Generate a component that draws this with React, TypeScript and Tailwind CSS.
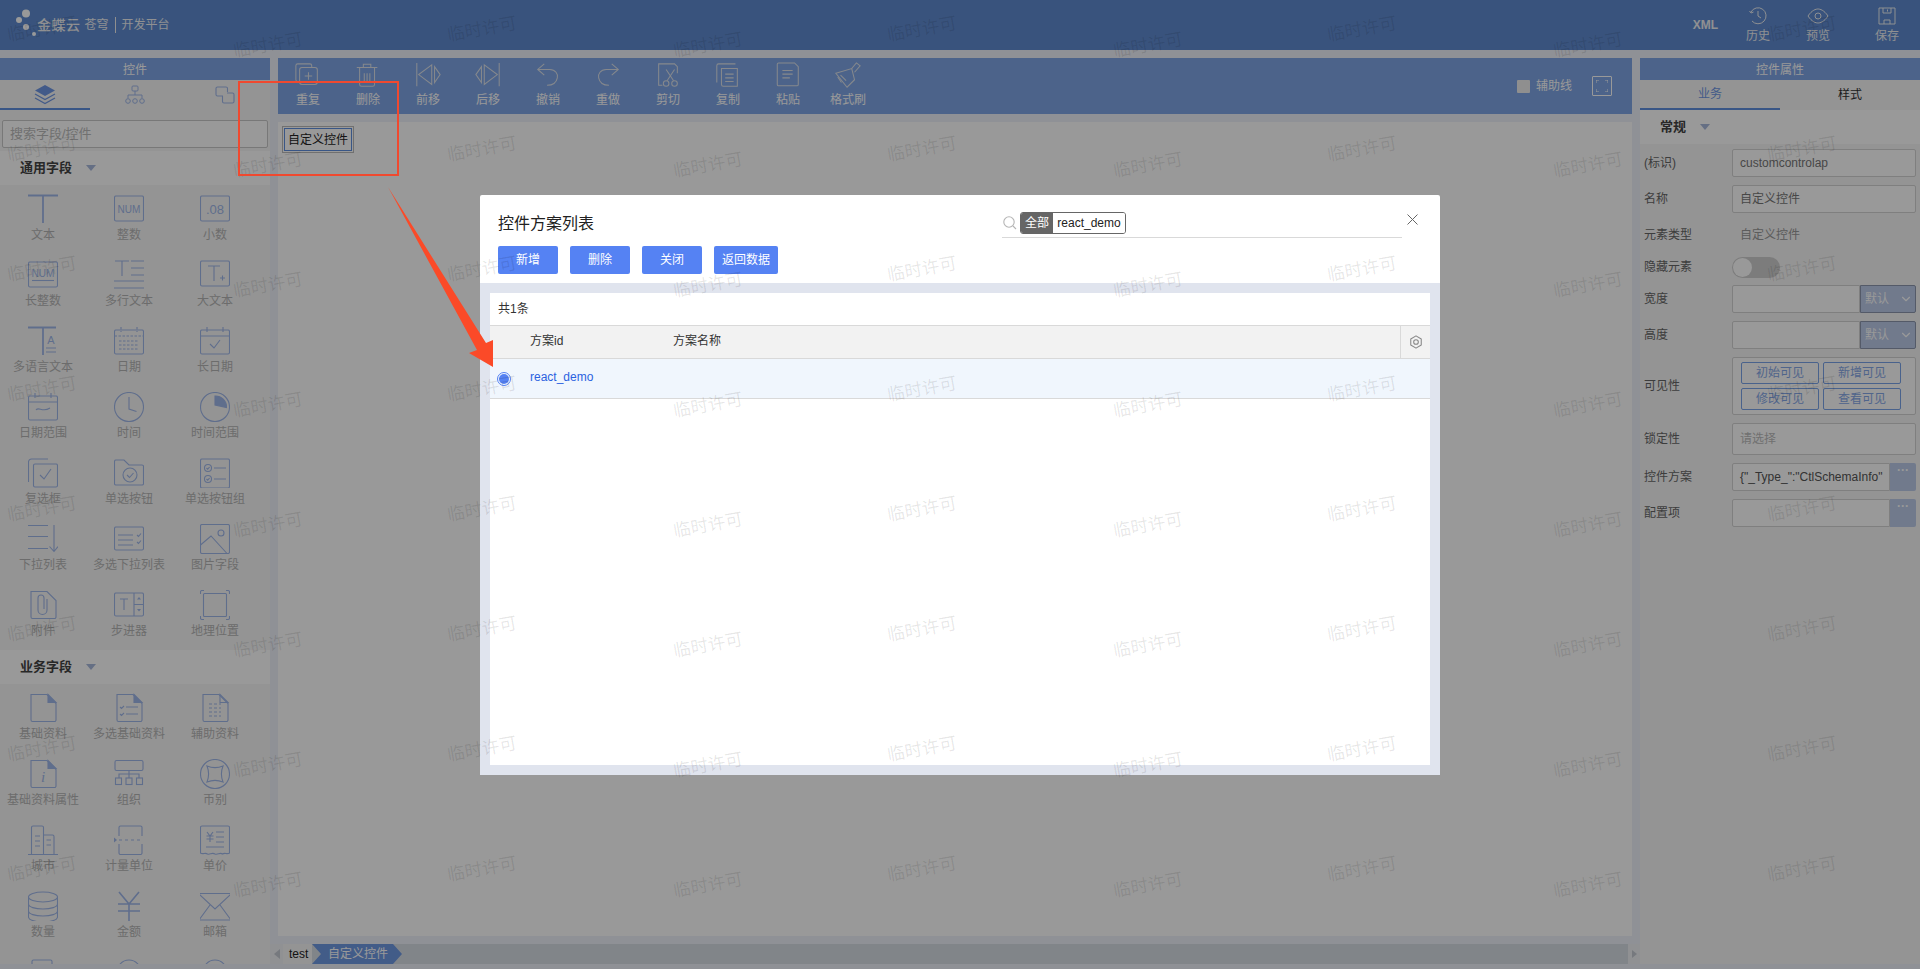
import React from "react";
import { ChevronDown } from "lucide-react";

const FONT = "font-['Liberation_Sans','Noto_Sans_CJK_SC',sans-serif]";

// stroke icon on a 30x30 box
function Ico({ children, size = 30 }: { children: React.ReactNode; size?: number }) {
  return (
    <svg width={size} height={size} viewBox="0 0 30 30" fill="none" stroke="currentColor" strokeWidth="1.1" className="shrink-0">
      {children}
    </svg>
  );
}

const DocBase = ({ fold = true }: { fold?: boolean }) => (
  <>
    <path d="M3 1.5H19L28 10.5V27a1.5 1.5 0 0 1-1.5 1.5H4.5A1.5 1.5 0 0 1 3 27Z" />
    <path d="M20 1.5L28 9.5H20Z" fill={fold ? "currentColor" : "none"} />
  </>
);

const GENERAL: [string, React.ReactNode][] = [
  ["文本", <path d="M0 1.5H30M15 1.5V29" strokeWidth="1.8" />],
  ["整数", <><rect x="0.5" y="2" width="29" height="25" rx="1.5" /><text x="15" y="19" fontSize="10" textAnchor="middle" fill="currentColor" stroke="none">NUM</text></>],
  ["小数", <><rect x="0.5" y="2" width="29" height="25" rx="1.5" /><text x="15" y="20" fontSize="13" textAnchor="middle" fill="currentColor" stroke="none">.08</text></>],
  ["长整数", <><rect x="0.5" y="2" width="29" height="25" rx="1.5" /><text x="15" y="17" fontSize="10" textAnchor="middle" fill="currentColor" stroke="none">NUM</text><path d="M4 20.5H26" /></>],
  ["多行文本", <path d="M1 1H15M8 1V16M17 1H30M17 8H30M17 15H30M0 21H30M0 28H30" />],
  ["大文本", <><rect x="0.5" y="1" width="29" height="25" rx="1.5" /><path d="M8 6H20M14 6V21M20 18H25M22.5 15.5V20.5" /></>],
  ["多语言文本", <><path d="M0 1.5H28M15 1.5V29" strokeWidth="1.8" /><text x="23" y="18" fontSize="11" textAnchor="middle" fill="currentColor" stroke="none">A</text><path d="M18 22H28M18 26H28" /></>],
  ["日期", <><rect x="0.5" y="4" width="29" height="24" rx="1.5" /><path d="M0.5 10H29.5M7 1V6M23 1V6M5 15H25M5 19H25M5 23H25" strokeDasharray="2.5 1.5" /></>],
  ["长日期", <><rect x="0.5" y="4" width="29" height="24" rx="1.5" /><path d="M0.5 10H29.5M7 1V6M23 1V6M10 18L14 22L20 14" /></>],
  ["日期范围", <><rect x="0.5" y="4" width="29" height="24" rx="1.5" /><path d="M0.5 10H29.5M7 1V6M23 1V6M8 18C11 14 14 21 22 16" /></>],
  ["时间", <><circle cx="15" cy="15" r="14.5" /><path d="M15 5V17L22.5 19.5" /></>],
  ["时间范围", <><circle cx="15" cy="15" r="14.5" /><path d="M15 4A11 11 0 0 1 26.5 15.5L15 13Z" fill="currentColor" /></>],
  ["复选框", <><path d="M20 1H3.5A3 3 0 0 0 0.5 4V24" /><rect x="5.5" y="6" width="24" height="23" rx="1.5" /><path d="M12 17L16 21L23 11" /></>],
  ["单选按钮", <><path d="M0.5 26V3.5A1.5 1.5 0 0 1 2 2H10L15 7H28A1.5 1.5 0 0 1 29.5 8.5V26A1.5 1.5 0 0 1 28 27H2A1.5 1.5 0 0 1 0.5 26Z" /><circle cx="16" cy="17" r="7" /><path d="M13 17L15.5 19.5L19.5 15" /></>],
  ["单选按钮组", <><rect x="0.5" y="1" width="29" height="29" rx="1.5" /><circle cx="8" cy="10" r="3.5" /><circle cx="8" cy="21" r="3.5" /><path d="M14 10H26M14 21H26M6.5 10L7.7 11.2L9.6 9M6.5 21L7.7 22.2L9.6 20" /></>],
  ["下拉列表", <path d="M0 1.5H20M0 12.5H20M0 24.5H20M26 1V27M21.5 22.5L26 27.5L30 22.5" />],
  ["多选下拉列表", <><rect x="0.5" y="3" width="29" height="23" rx="1.5" /><path d="M4 11H19M4 16H19M4 21H19M23 11L24.5 12.5L27 9.5M23 18L24.5 19.5L27 16.5" /></>],
  ["图片字段", <><rect x="0.5" y="0.5" width="29" height="29" rx="1.5" /><circle cx="21" cy="9" r="3" /><path d="M0.5 21L11 12L27 29.5" /></>],
  ["附件", <><path d="M3 1.5H19L28 10.5V27a1.5 1.5 0 0 1-1.5 1.5H4.5A1.5 1.5 0 0 1 3 27Z" /><path d="M19 9V20A4.5 4.5 0 0 1 10 20V8A3 3 0 0 1 16 8V19" /></>],
  ["步进器", <><rect x="0.5" y="3" width="29" height="23" rx="1.5" /><path d="M20 3V26M20 14.5H29.5M6 9H14M10 9V20" /><path d="M23 9.5L25 7L27 9.5ZM23 19L25 21.5L27 19Z" fill="currentColor" stroke="none" /></>],
  ["地理位置", <><rect x="3.5" y="3.5" width="23" height="23" rx="1" /><path d="M0.5 4V2A1.5 1.5 0 0 1 2 0.5H4M26 0.5H28A1.5 1.5 0 0 1 29.5 2V4M0.5 26V28A1.5 1.5 0 0 0 2 29.5H4M26 29.5H28A1.5 1.5 0 0 0 29.5 28V26" /></>],
];

const BUSINESS: [string, React.ReactNode][] = [
  ["基础资料", <DocBase />],
  ["多选基础资料", <><DocBase /><path d="M6 14L7.5 15.5L10 13M6 21L7.5 22.5L10 20M12 14H24M12 21H24" /></>],
  ["辅助资料", <><DocBase fold={false} /><path d="M9 11H21M9 15H21M9 19H21M9 23H21" strokeDasharray="3 2" /></>],
  ["基础资料属性", <><DocBase /><text x="15" y="23" fontSize="15" fontStyle="italic" fontFamily="Liberation Serif" textAnchor="middle" fill="currentColor" stroke="none">i</text></>],
  ["组织", <><rect x="1" y="1.5" width="28" height="10" rx="1.5" /><path d="M15 11.5V19M5 19V15H25V19" /><rect x="1.5" y="19" width="6" height="6.5" /><rect x="12" y="19" width="6" height="6.5" /><rect x="22.5" y="19" width="6" height="6.5" /></>],
  ["币别", <><circle cx="15" cy="15" r="14.5" /><path d="M7 7C12 9 18 9 23 7C21 12 21 18 23 23C18 21 12 21 7 23C9 18 9 12 7 7Z" /></>],
  ["城市", <><path d="M0 29.5H30M3.5 29.5V2.5A1.5 1.5 0 0 1 5 1H14A1.5 1.5 0 0 1 15.5 2.5V29.5M15.5 10H24.5A1.5 1.5 0 0 1 26 11.5V29.5" /><path d="M7 11H12M7 16H12M7 21H12M18.5 15H23M18.5 20H23" /></>],
  ["计量单位", <><path d="M5 11V2.5A1.5 1.5 0 0 1 6.5 1H26.5A1.5 1.5 0 0 1 28 2.5V11M5 19V28A1.5 1.5 0 0 0 6.5 29.5H26.5A1.5 1.5 0 0 0 28 28V19" /><path d="M5 15H28" strokeDasharray="3 3" /><path d="M0 12.5L3 15L0 17.5Z" fill="currentColor" stroke="none" /></>],
  ["单价", <><path d="M0.5 28V2.5A1.5 1.5 0 0 1 2 1H28A1.5 1.5 0 0 1 29.5 2.5V28C27 30 25 27 22.5 29C20 27 18 30 15 29C12 27 10 30 7.5 29C5 27 3 30 0.5 28Z" /><path d="M7 7L10 11L13 7M10 11V17M6.5 11H13.5M6.5 14H13.5M16 7H24M16 12H24M16 17H24M6 22H24" /></>],
  ["数量", <><ellipse cx="15" cy="6" rx="14.5" ry="5" /><path d="M0.5 6V26C0.5 29 7 31 15 31S29.5 29 29.5 26V6M0.5 13C0.5 16 7 18 15 18S29.5 16 29.5 13M0.5 20C0.5 23 7 25 15 25S29.5 23 29.5 20" /></>],
  ["金额", <path d="M5 1L15 13L25 1M15 13V31M4 13H26M4 20H26" strokeWidth="1.6" />],
  ["邮箱", <><rect x="-1" y="2.5" width="32" height="26.5" rx="1" /><path d="M-1 3L15 18L31 3M-1 29L10 14M31 29L20 14" /></>],
  ["", <rect x="4" y="3" width="20" height="26" rx="1.5" />],
  ["", <circle cx="15" cy="15" r="12" />],
  ["", <circle cx="15" cy="15" r="12" />],
];

function Palette({ items, className = "" }: { items: [string, React.ReactNode][]; className?: string }) {
  return (
    <div className={`grid shrink-0 grid-cols-[86px_86px_86px] content-start overflow-hidden bg-[#f7f7f7] pt-[9px] text-[#9fb7ea] ${className}`}>
      {items.map(([name, icon], i) => (
        <div key={i} className="flex h-[66px] flex-col items-center">
          <Ico>{icon}</Ico>
          {name && <span className="mt-[3px] whitespace-nowrap text-[12px] leading-[16px] text-[#b5b5b5]">{name}</span>}
        </div>
      ))}
    </div>
  );
}

const Section = ({ title, className = "" }: { title: string; className?: string }) => (
  <div className={`flex h-[34px] shrink-0 items-center bg-white pl-[20px] ${className}`}>
    <span className="text-[13px] font-bold text-[#444]">{title}</span>
    <span className="ml-[14px] h-0 w-0 border-x-[5px] border-t-[6px] border-x-transparent border-t-[#a9b9dc]" />
  </div>
);

const PanelTitle = ({ title }: { title: string }) => (
  <div className="flex h-[22px] shrink-0 items-center justify-center bg-[#7fa6e6] pt-[1px] text-[12px] text-white">{title}</div>
);

function LeftPanel() {
  return (
    <aside className="flex h-[906px] w-[270px] shrink-0 flex-col overflow-hidden bg-[#f7f7f7]">
      <PanelTitle title="控件" />
      <div className="flex h-[30px] shrink-0 text-[#9fb7ea]">
        <div className="flex w-[90px] items-center justify-center border-b-[2px] border-[#5f8fe0] pt-[1px] text-[#6f97e4]">
          <svg width="22" height="20" viewBox="0 0 22 20" fill="currentColor">
            <path d="M11 0L21 5.5L11 11L1 5.5Z" />
            <path d="M1 9L11 14.5L21 9M1 13L11 18.5L21 13" fill="none" stroke="currentColor" strokeWidth="1.2" />
          </svg>
        </div>
        <div className="flex w-[90px] items-center justify-center">
          <svg width="20" height="20" viewBox="0 0 20 20" fill="none" stroke="currentColor" strokeWidth="1">
            <rect x="7" y="1" width="6" height="5" rx="1" />
            <path d="M10 6V10M3 13V10H17V13" />
            <circle cx="3" cy="16" r="2.3" />
            <circle cx="10" cy="16" r="2.3" />
            <circle cx="17" cy="16" r="2.3" />
          </svg>
        </div>
        <div className="flex w-[90px] items-center justify-center">
          <svg width="20" height="18" viewBox="0 0 20 18" fill="none" stroke="currentColor" strokeWidth="1.1">
            <path d="M8 10H2.5A1.5 1.5 0 0 1 1 8.500V2.500A1.500 1.500 0 0 1 2.500 1H11A1.500 1.500 0 0 1 12.500 2.500V6" />
            <path d="M12 7H17.500A1.500 1.500 0 0 1 19 8.500V15.500A1.500 1.500 0 0 1 17.500 17H9A1.500 1.500 0 0 1 7.500 15.500V10" />
          </svg>
        </div>
      </div>
      <div className="shrink-0 bg-[#f7f7f7] px-[2px] pb-[3px] pt-[10px]">
        <div className="flex h-[28px] items-center rounded-[2px] border border-[#c8c8c8] bg-white pl-[7px] text-[13px] text-[#bbb]">搜索字段/控件</div>
      </div>
      <Section title="通用字段" />
      <Palette items={GENERAL} className="h-[465px]" />
      <Section title="业务字段" />
      <Palette items={BUSINESS} />
    </aside>
  );
}

const TOOLS: [string, React.ReactNode][] = [
  ["重复", <><path d="M8 21H4A2 2 0 0 1 2 19V4A2 2 0 0 1 4 2H17A2 2 0 0 1 19 4V6" /><rect x="6" y="6" width="19" height="18" rx="2.500" /><path d="M15.500 11V19M11.500 15H19.500" /></>],
  ["删除", <><path d="M3 6H25M10 6V2.500H18V6M6 6V24A2 2 0 0 0 8 26H20A2 2 0 0 0 22 24V6M11 12V21M14 12V21M17 12V21" /></>],
  ["前移", <path d="M3 1V26M19 3L5 13.500L19 24ZM22 5V22L28 13.500Z" />],
  ["后移", <path d="M27 1V26M11 3L25 13.500L11 24ZM8 5V22L2 13.500Z" />],
  ["撤销", <path d="M11 2L4 8L11 14M4 8H17C23 8 26 13 25 17C24 22 20 25 14 25" />],
  ["重做", <path d="M19 2L26 8L19 14M26 8H13C7 8 4 13 5 17C6 22 10 25 16 25" />],
  ["剪切", <><path d="M9 25H5V2H22L25 5V12" /><path d="M13 8L21 20M22 8L14 20" /><circle cx="13" cy="23" r="3" /><circle cx="22" cy="23" r="3" /></>],
  ["复制", <><path d="M23 2H5A2 2 0 0 0 3 4V22" /><path d="M8 7H25V26H10A2 2 0 0 1 8 24Z" /><path d="M12 13H21M12 17H21M12 21H21" /></>],
  ["粘贴", <><path d="M5 1H22L26 5V24A1.500 1.500 0 0 1 24.500 25.500H5A1.500 1.500 0 0 1 3.500 24V2.500A1.500 1.500 0 0 1 5 1Z" /><path d="M9 9H20M9 13H20M9 17H17" /></>],
  ["格式刷", <><path d="M2 12L19 7L22 19L14 27Z" /><path d="M19 7L24 1L28 4L22 11M7 14L13 20M4 16L8 22" /></>],
];

function Toolbar() {
  return (
    <div className="flex h-[56px] shrink-0 items-start bg-[#7fa6e6] pt-[4px] text-[#dfe3ea]">
      {TOOLS.map(([name, icon]) => (
        <div key={name} className="flex w-[60px] shrink-0 flex-col items-center">
          <Ico size={28}>{icon}</Ico>
          <span className="mt-[2px] text-[12px] leading-[16px] text-white">{name}</span>
        </div>
      ))}
      <div className="ml-auto mr-[20px] mt-[14px] flex items-center gap-[20px]">
        <label className="flex items-center gap-[6px] text-[12px] text-white">
          <span className="h-[13px] w-[13px] rounded-[1px] bg-[#eeeeee]" />
          辅助线
        </label>
        <span className="flex h-[20px] w-[20px] items-center justify-center rounded-[1px] border border-white">
          <svg width="12" height="12" viewBox="0 0 12 12" fill="none" stroke="#fff">
            <path d="M0 3V0H3M9 0H12V3M0 9V12H3M9 12H12V9" />
          </svg>
        </span>
      </div>
    </div>
  );
}

function BottomBar() {
  return (
    <div className="mt-[8px] flex h-[20px] shrink-0 items-stretch bg-[#d7dee5] text-[12px]">
      <div className="flex w-[13px] items-center justify-center bg-[#f0f2f5]">
        <span className="h-0 w-0 border-y-[5px] border-r-[6px] border-y-transparent border-r-[#c5cad3]" />
      </div>
      <div className="flex w-[29px] items-center bg-[#f7f7f7] pl-[6px] text-[#222]">test</div>
      <div className="flex w-[90px] items-center bg-[#6f99e3] pl-[16px] text-white [clip-path:polygon(0_0,90%_0,100%_50%,90%_100%,0_100%,10%_50%)]">自定义控件</div>
      <div className="ml-auto flex w-[12px] items-center justify-center bg-[#f0f2f5]">
        <span className="h-0 w-0 border-y-[4px] border-l-[5px] border-y-transparent border-l-[#c5cad3]" />
      </div>
    </div>
  );
}

function Center() {
  return (
    <main className="flex h-[906px] min-w-0 flex-1 flex-col">
      <div className="mx-[8px] flex min-h-0 flex-1 flex-col">
        <Toolbar />
        <div className="mt-[8px] flex-1 bg-white p-[4px]">
          <div className="inline-block border border-[#bbb] p-[1px]">
            <div className="flex h-[23px] w-[68px] items-center justify-center border border-[#5f8fe0] text-[12px] text-[#222]">自定义控件</div>
          </div>
        </div>
      </div>
      <BottomBar />
    </main>
  );
}

const Field = ({ children, className = "" }: { children?: React.ReactNode; className?: string }) => (
  <div className={`flex h-[28px] w-[184px] items-center rounded-[2px] border border-[#d4d4d4] bg-white pl-[7px] text-[12px] text-[#777] ${className}`}>{children}</div>
);

const Row = ({ label, children, className = "" }: { label: string; children: React.ReactNode; className?: string }) => (
  <div className={`flex items-center ${className}`}>
    <span className="w-[92px] shrink-0 pl-[4px] text-[12px] text-[#666]">{label}</span>
    {children}
  </div>
);

const Unit = () => (
  <div className="flex h-[28px] w-[184px]">
    <div className="flex-1 rounded-l-[2px] border border-[#d4d4d4] bg-white" />
    <div className="flex w-[56px] items-center justify-between rounded-r-[2px] border border-[#8d97ad] bg-[#bccbea] pl-[4px] pr-[2px] text-[12px] text-white">
      默认 <ChevronDown size={14} strokeWidth={2} />
    </div>
  </div>
);

const Picker = ({ value }: { value?: string }) => (
  <div className="flex h-[28px] w-[184px]">
    <div className="flex min-w-0 flex-1 items-center overflow-hidden whitespace-nowrap rounded-l-[2px] border border-[#d4d4d4] bg-white pl-[7px] text-[12px] text-[#555]">{value}</div>
    <div className="flex w-[26px] items-start justify-center rounded-r-[2px] bg-[#bccbea] text-[12px] font-bold leading-[14px] text-white">···</div>
  </div>
);

function RightPanel() {
  return (
    <aside className="h-[906px] w-[280px] shrink-0 overflow-hidden bg-[#f7f7f7]">
      <PanelTitle title="控件属性" />
      <div className="flex h-[30px] text-[12px]">
        <div className="flex w-[140px] items-center justify-center border-b-[2px] border-[#5f8fe0] text-[#6f97e4]">业务</div>
        <div className="flex w-[140px] items-center justify-center text-[#333]">样式</div>
      </div>
      <Section title="常规" />
      <div className="pt-[5px]">
        <Row label="(标识)" className="mb-[8px]"><Field>customcontrolap</Field></Row>
        <Row label="名称" className="mb-[8px]"><Field>自定义控件</Field></Row>
        <Row label="元素类型" className="mb-[8px] h-[28px]"><span className="pl-[8px] text-[12px] text-[#999]">自定义控件</span></Row>
        <Row label="隐藏元素" className="mb-[8px] h-[20px]">
          <div className="flex h-[21px] w-[48px] items-center rounded-full bg-[#cfcfcf] pl-[1px]"><span className="h-[19px] w-[19px] rounded-full bg-white" /></div>
        </Row>
        <Row label="宽度" className="mb-[8px]"><Unit /></Row>
        <Row label="高度" className="mb-[8px]"><Unit /></Row>
        <Row label="可见性" className="mb-[8px]">
          <div className="grid h-[58px] w-[184px] grid-cols-[78px_78px] content-center justify-start gap-x-[4px] gap-y-[4px] rounded-[2px] border border-[#d4d4d4] bg-white pl-[8px]">
            {["初始可见", "新增可见", "修改可见", "查看可见"].map((t) => (
              <span key={t} className="flex h-[22px] items-center justify-center rounded-[2px] border border-[#7aa3ea] text-[12px] text-[#86a8e8]">{t}</span>
            ))}
          </div>
        </Row>
        <Row label="锁定性" className="mb-[8px]"><Field className="h-[32px] text-[#bbb]">请选择</Field></Row>
        <Row label="控件方案" className="mb-[8px]"><Picker value={'{"_Type_":"CtlSchemaInfo"'} /></Row>
        <Row label="配置项"><Picker /></Row>
      </div>
    </aside>
  );
}

function Header() {
  return (
    <header className="flex h-[50px] items-center bg-[#5f8bd0] text-[#eef0f4]">
      <svg width="30" height="32" viewBox="0 0 30 32" className="ml-[15px] mt-[-1px]" fill="#fff">
        <circle cx="11" cy="4.500" r="4" />
        <circle cx="4" cy="11" r="3" />
        <circle cx="11" cy="18" r="3" />
        <circle cx="19" cy="25" r="2" />
      </svg>
      <span className="ml-[-8px] text-[14px] font-medium tracking-[0.5px]">金蝶云</span>
      <span className="ml-[4px] text-[12px]">苍穹</span>
      <span className="mx-[6px] h-[16px] w-px bg-[#eeeeee]" />
      <span className="text-[12px]">开发平台</span>
      <span className="ml-auto text-[12px] font-bold">XML</span>
      <div className="ml-[24px] flex w-[32px] flex-col items-center">
        <svg width="18" height="18" viewBox="0 0 18 18" fill="none" stroke="currentColor" strokeWidth="1">
          <path d="M2 5A8 8 0 1 1 3 14M9 4V9L12 11M0.500 4L2 6L4.500 5" />
        </svg>
        <span className="mt-[4px] text-[12px] leading-[14px]">历史</span>
      </div>
      <div className="ml-[28px] flex w-[32px] flex-col items-center">
        <svg width="22" height="18" viewBox="0 0 22 18" fill="none" stroke="currentColor" strokeWidth="1">
          <path d="M1 9C5 3 9 2 11 2S17 3 21 9C17 15 13 16 11 16S5 15 1 9Z" />
          <circle cx="11" cy="9" r="3" />
        </svg>
        <span className="mt-[4px] text-[12px] leading-[14px]">预览</span>
      </div>
      <div className="ml-[37px] mr-[17px] flex w-[32px] flex-col items-center">
        <svg width="18" height="18" viewBox="0 0 18 18" fill="none" stroke="currentColor" strokeWidth="1">
          <path d="M1 1H17V17H1ZM5 1V6H13V1M6 17V13H12V17M9.500 2.500V4.500" />
        </svg>
        <span className="mt-[4px] text-[12px] leading-[14px]">保存</span>
      </div>
    </header>
  );
}

function Modal() {
  return (
    <div className="absolute left-[480px] top-[195px] flex h-[580px] w-[960px] flex-col rounded-[2px] bg-white">
      <div className="flex h-[88px] shrink-0 flex-col pl-[18px] pr-[22px]">
        <div className="flex h-[51px] items-start pt-[18px]">
          <h2 className="text-[16px] font-normal leading-[22px] text-[#212121]">控件方案列表</h2>
          <div className="ml-auto flex items-start">
            <div className="-mt-[1px] flex h-[26px] w-[400px] items-start border-b border-[#d9d9d9]">
              <svg width="14" height="14" viewBox="0 0 14 14" fill="none" stroke="#b5b5b5" strokeWidth="1.100" className="ml-[1px] mt-[4px]">
                <circle cx="6" cy="6" r="5.200" />
                <path d="M10 10L13 13" />
              </svg>
              <div className="ml-[3px] flex h-[22px] items-stretch overflow-hidden rounded-[3px] border border-[#666] text-[12px]">
                <span className="flex w-[32px] items-center justify-center bg-[#666] text-white">全部</span>
                <span className="flex w-[72px] items-center justify-center bg-white text-[#222]">react_demo</span>
              </div>
            </div>
            <svg width="11" height="11" viewBox="0 0 11 11" fill="none" stroke="#666" strokeWidth="1" className="ml-[5px] mt-[1px]">
              <path d="M0.500 0.500L10.500 10.500M10.500 0.500L0.500 10.500" />
            </svg>
          </div>
        </div>
        <div className="flex gap-[12px] text-[12px] text-white">
          {["新增", "删除", "关闭"].map((t) => (
            <button key={t} className="flex h-[28px] w-[60px] items-center justify-center rounded-[2px] bg-[#5582f3]">{t}</button>
          ))}
          <button className="flex h-[28px] w-[64px] items-center justify-center rounded-[2px] bg-[#5582f3]">返回数据</button>
        </div>
      </div>
      <div className="flex min-h-0 flex-1 flex-col bg-[#e0e4ee] p-[10px]">
        <div className="flex-1 bg-white text-[12px] text-[#333]">
          <div className="flex h-[32px] items-center pl-[8px]">共1条</div>
          <div className="flex h-[34px] items-center border-y border-[#d9d9d9] bg-[#f2f2f2]">
            <span className="w-[183px] pb-[2px] pl-[40px]">方案id</span>
            <span className="pb-[2px]">方案名称</span>
            <span className="ml-auto flex h-full w-[30px] items-center justify-center border-l border-[#d9d9d9]">
              <svg width="14" height="14" viewBox="0 0 24 24" fill="none" stroke="#888" strokeWidth="1.800">
                <path d="M12 1.500L21 6.750V17.250L12 22.500L3 17.250V6.750Z" strokeLinejoin="round" />
                <circle cx="12" cy="12" r="4" />
              </svg>
            </span>
          </div>
          <div className="flex h-[40px] items-center border-b border-[#d9d9d9] bg-[#f0f6fd]">
            <span className="ml-[7px] flex h-[14px] w-[14px] items-center justify-center rounded-full border border-[#5582f3]">
              <span className="h-[10px] w-[10px] rounded-full bg-[#5582f3]" />
            </span>
            <span className="ml-[19px] pb-[3px] text-[#2b62e0]">react_demo</span>
          </div>
        </div>
      </div>
    </div>
  );
}

// tiled licence watermark, two offset columns
const WM: { x: number; y: number }[] = [];
for (let i = 0; i < 5; i++) {
  for (let j = 0; j < 8; j++) {
    WM.push({ x: 7 + 440 * i, y: 17 + 120 * j });
    if (i < 4) WM.push({ x: 233 + 440 * i, y: 33 + 120 * j });
  }
}

function Watermark() {
  return (
    <div className="pointer-events-none absolute inset-0 overflow-hidden">
      {WM.map((p, i) => (
        <span
          key={i}
          className="absolute -rotate-[10deg] whitespace-nowrap text-[17.500px] leading-[24px] text-black/10"
          style={{ left: p.x, top: p.y }}
        >
          临时许可
        </span>
      ))}
    </div>
  );
}

export default function App() {
  return (
    <div className={`relative h-[969px] w-[1920px] overflow-hidden bg-[#eef2fa] ${FONT}`}>
      <Header />
      <div className="flex pt-[8px]">
        <LeftPanel />
        <Center />
        <RightPanel />
      </div>
      <div className="absolute inset-0 bg-black/40" />
      <Modal />
      <Watermark />
      {/* annotation drawn over the screenshot */}
      <div className="absolute left-[238px] top-[81px] h-[95px] w-[161px] border-2 border-[#f0492f]" />
      <svg className="absolute left-[380px] top-[180px]" width="120" height="195" viewBox="380 180 120 195" fill="#fb4a28">
        <path d="M388 187L486 343L493 340V367L469 353L477 350Z" />
      </svg>
    </div>
  );
}
